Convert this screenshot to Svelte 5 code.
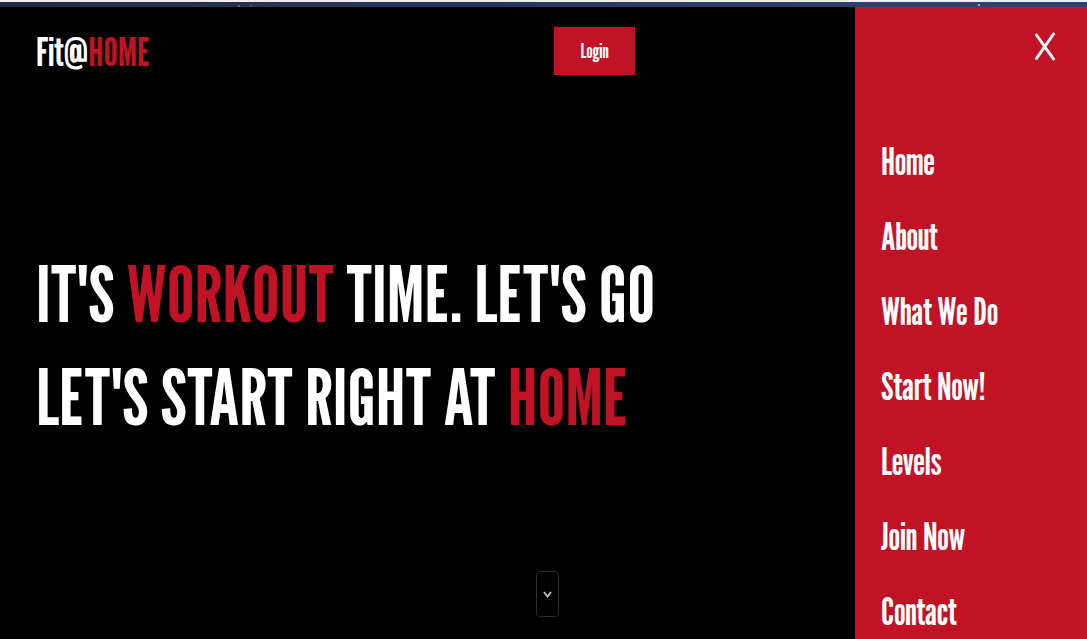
<script>
  const links = ['Home', 'About', 'What We Do', 'Start Now!', 'Levels', 'Join Now', 'Contact'];
  let open = $state(true);
</script>

<div class="page">
  <div class="strip"><i></i><i></i><i></i></div>
  <main>
    <header>
      <a class="logo" href="#home">Fit<b>@</b><span>HOME</span></a>
      <button class="login" type="button">Login</button>
    </header>
    <h1>
      <span class="line">IT'S <em>WORKOUT</em> TIME. LET'S GO</span>
      <span class="line">LET'S START RIGHT AT <em>HOME</em></span>
    </h1>
    <button class="down" type="button" aria-label="Scroll down">
      <svg viewBox="0 0 10 8" width="10" height="8"><path d="M1 2 L4.5 6.5 L8 2" /></svg>
    </button>
  </main>
  {#if open}
    <aside>
      <button class="close" type="button" aria-label="Close menu" onclick={() => (open = false)}>
        <svg viewBox="0 0 22 30" width="22" height="30"><path d="M2.5 3 L19.5 27 M19.5 2 L2.5 26.5" /></svg>
      </button>
      <nav>
        {#each links as label}
          <a href="#{label}">{label}</a>
        {/each}
      </nav>
    </aside>
  {/if}
</div>

<style>
  :global(body) {
    margin: 0;
    background: #000;
  }
  .page {
    position: relative;
    display: flex;
    flex-direction: column;
    height: 100vh;
    overflow: hidden;
    color: #fff;
    font-family: 'League Gothic', 'Roboto Condensed', 'Liberation Sans', sans-serif;
  }
  .strip {
    position: relative;
    flex: none;
    height: 5px;
    border-top: 2px solid #eee;
    background: linear-gradient(90deg, #212d4b, #2e4573);
  }
  .strip i {
    position: absolute;
    top: 3px;
    left: 238px;
    width: 2px;
    height: 2px;
    background: #5a6689;
  }
  .strip i:nth-child(2) {
    left: 250px;
    background: #46527a;
  }
  .strip i:nth-child(3) {
    top: 2px;
    left: 978px;
    background: #91a8d0;
  }
  main {
    flex: 1;
    display: flex;
    flex-direction: column;
    align-items: center;
    padding: 20px 28px 22px 36px;
  }
  header {
    align-self: stretch;
    display: flex;
    align-items: center;
    justify-content: space-between;
  }
  header::after {
    content: '';
    width: 20px;
  }
  button {
    margin: 0;
    padding: 0;
    border: 0;
    color: inherit;
    font-family: inherit;
    cursor: pointer;
  }
  a {
    color: inherit;
    text-decoration: none;
  }
  .logo {
    min-width: 114px;
    font-size: 40px;
    line-height: 48px;
  }
  .logo b {
    font-family: 'Pathway Gothic One', 'Roboto Condensed', sans-serif;
  }
  .logo span,
  em {
    color: #c11325;
    font-style: normal;
  }
  .login {
    min-width: 81px;
    background: #c11325;
    font-size: 20px;
    line-height: 48px;
  }
  h1 {
    align-self: stretch;
    margin: auto 0;
    padding-top: 43px;
    font-size: 78px;
    line-height: 103px;
    font-weight: 400;
  }
  .line {
    display: block;
    white-space: nowrap;
  }
  .down {
    display: grid;
    place-items: center;
    width: 23px;
    height: 46px;
    border: 1px solid #2d2d2d;
    border-radius: 4px;
    background: #000;
  }
  svg path {
    fill: none;
    stroke: #bbb;
    stroke-width: 2;
  }
  aside {
    position: absolute;
    top: 7px;
    right: 0;
    bottom: 0;
    box-sizing: border-box;
    width: 232px;
    padding: 25px 26px 0;
    display: flex;
    flex-direction: column;
    background: #c11325;
    overflow: hidden;
  }
  .close {
    align-self: flex-end;
    width: 32px;
    height: 30px;
    background: none;
  }
  .close path {
    stroke: #fff;
    stroke-width: 3;
    stroke-linecap: round;
  }
  nav {
    display: flex;
    flex-direction: column;
    margin-top: 62px;
  }
  nav a {
    font-size: 37px;
    line-height: 75px;
  }
</style>
